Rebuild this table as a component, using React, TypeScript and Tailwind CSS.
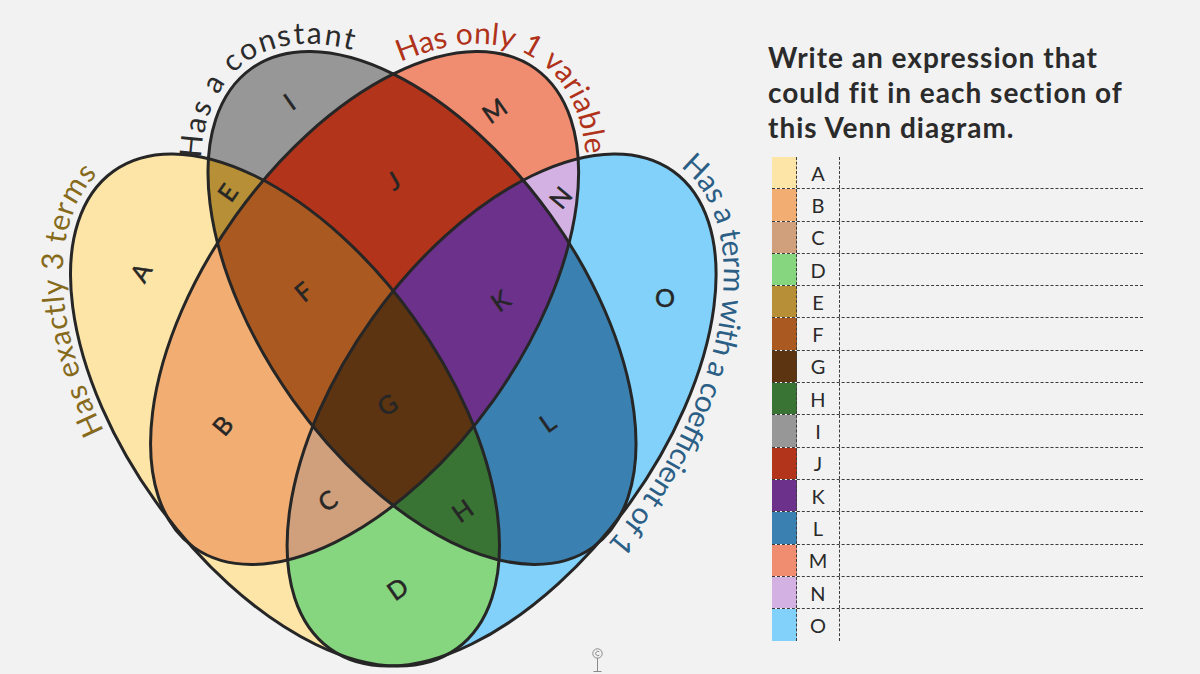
import React from 'react';

const FONT = "Lato, 'Noto Sans', 'DejaVu Sans', sans-serif";

type Ell = { cx: number; cy: number; a: number; b: number; phi: number };

const RX = 294;
const RY = 158.5;
const LABEL_OFF = 8;

// the four sets, left to right
const Y: Ell = { cx: 285, cy: 410, a: RX, b: RY, phi: 54.3 };
const GR: Ell = { cx: 422, cy: 308, a: RX, b: RY, phi: 54.5 };
const RD: Ell = { cx: 364.6, cy: 308, a: RX, b: RY, phi: -54.5 };
const BL: Ell = { cx: 501.6, cy: 410, a: RX, b: RY, phi: -54.3 };

const ids = new Map<Ell, string>([
  [Y, 'cY'],
  [GR, 'cG'],
  [RD, 'cR'],
  [BL, 'cB'],
]);

const colors: Record<string, string> = {
  A: '#fce5a6',
  B: '#f1ad72',
  C: '#d0a07c',
  D: '#86d57f',
  E: '#b68f36',
  F: '#aa5921',
  G: '#5c3412',
  H: '#3a7434',
  I: '#979797',
  J: '#b1341b',
  K: '#6b318b',
  L: '#3a80b0',
  M: '#f08c70',
  N: '#d3b2e3',
  O: '#81d1fa',
};

function Shape({ e, ...rest }: { e: Ell } & React.SVGProps<SVGEllipseElement>) {
  return (
    <ellipse
      cx={e.cx}
      cy={e.cy}
      rx={e.a}
      ry={e.b}
      transform={`rotate(${e.phi} ${e.cx} ${e.cy})`}
      {...rest}
    />
  );
}

// paint the intersection of all sets in the list
function Inter({ sets, fill }: { sets: Ell[]; fill: string }) {
  const last = sets[sets.length - 1];
  let node: React.ReactNode = <Shape e={last} fill={fill} />;
  for (let i = sets.length - 2; i >= 0; i--) {
    node = <g clipPath={`url(#${ids.get(sets[i])})`}>{node}</g>;
  }
  return <>{node}</>;
}

function point(e: Ell, tDeg: number, off: number) {
  const t = (tDeg * Math.PI) / 180;
  const p = (e.phi * Math.PI) / 180;
  const u = (e.a + off) * Math.cos(t);
  const v = (e.b + off) * Math.sin(t);
  return [e.cx + u * Math.cos(p) - v * Math.sin(p), e.cy + u * Math.sin(p) + v * Math.cos(p)];
}

function arc(e: Ell, t0: number, t1: number, off: number) {
  const pts: number[][] = [];
  const steps = 120;
  for (let i = 0; i <= steps; i++) pts.push(point(e, t0 + ((t1 - t0) * i) / steps, off));
  let len = 0;
  for (let i = 1; i < pts.length; i++) {
    len += Math.hypot(pts[i][0] - pts[i - 1][0], pts[i][1] - pts[i - 1][1]);
  }
  const d = pts.map((q, i) => `${i ? 'L' : 'M'}${q[0].toFixed(1)} ${q[1].toFixed(1)}`).join(' ');
  return { d, len };
}

const labels = [
  { id: 'lG', text: 'Has a constant', e: GR, t0: 146, t1: 214, color: '#2b2b2b' },
  { id: 'lR', text: 'Has only 1 variable', e: RD, t0: -43, t1: 33, color: '#b0321a' },
  { id: 'lY', text: 'Has exactly 3 terms', e: Y, t0: 107, t1: 175, color: '#876b1d' },
  { id: 'lB', text: 'Has a term with a coefficient of 1', e: BL, t0: 1, t1: 99, color: '#2b5f86' },
];

const letters: [string, number, number, number][] = [
  ['A', 140, 272, -60],
  ['B', 222, 425, -50],
  ['C', 327, 500, -35],
  ['D', 397, 588, -35],
  ['E', 227, 192, -55],
  ['F', 303, 291, -40],
  ['G', 387, 404, -30],
  ['H', 462, 510, -35],
  ['I', 289, 101, -35],
  ['J', 393, 180, -30],
  ['K', 500, 300, -35],
  ['L', 547, 422, -35],
  ['M', 494, 110, -35],
  ['N', 560, 197, -50],
  ['O', 665, 297, 0],
];

function Venn() {
  return (
    <svg width={760} height={674} viewBox="0 0 760 674" className="shrink-0" style={{ fontFamily: FONT }}>
      <defs>
        {[Y, GR, RD, BL].map((e) => (
          <clipPath key={ids.get(e)} id={ids.get(e)}>
            <Shape e={e} />
          </clipPath>
        ))}
        {labels.map((l) => (
          <path key={l.id} id={l.id} d={arc(l.e, l.t0, l.t1, LABEL_OFF).d} />
        ))}
      </defs>

      <Shape e={Y} fill={colors.A} />
      <Shape e={BL} fill={colors.O} />
      <Shape e={GR} fill={colors.I} />
      <Shape e={RD} fill={colors.M} />

      <Inter sets={[Y, GR]} fill={colors.E} />
      <Inter sets={[Y, RD]} fill={colors.B} />
      <Inter sets={[Y, BL]} fill={colors.D} />
      <Inter sets={[GR, RD]} fill={colors.J} />
      <Inter sets={[GR, BL]} fill={colors.L} />
      <Inter sets={[RD, BL]} fill={colors.N} />

      <Inter sets={[Y, GR, RD]} fill={colors.F} />
      <Inter sets={[Y, GR, BL]} fill={colors.H} />
      <Inter sets={[Y, RD, BL]} fill={colors.C} />
      <Inter sets={[GR, RD, BL]} fill={colors.K} />

      <Inter sets={[Y, GR, RD, BL]} fill={colors.G} />

      {[Y, GR, RD, BL].map((e) => (
        <Shape key={ids.get(e)} e={e} fill="none" stroke="#262626" strokeWidth={3} />
      ))}

      {letters.map(([ch, x, y, r]) => (
        <text
          key={ch}
          x={x}
          y={y}
          fontSize={25}
          fill="#262626"
          stroke="#262626"
          strokeWidth={0.5}
          textAnchor="middle"
          dominantBaseline="central"
          transform={`rotate(${r} ${x} ${y})`}
        >
          {ch}
        </text>
      ))}

      {labels.map((l) => (
        <text key={l.id} fontSize={30} fill={l.color}>
          <textPath href={`#${l.id}`} textLength={arc(l.e, l.t0, l.t1, LABEL_OFF).len} lengthAdjust="spacing">
            {l.text}
          </textPath>
        </text>
      ))}

      {/* little copyright marker */}
      <g stroke="#8a8a8a" fill="none" strokeWidth={1}>
        <circle cx={597.5} cy={653.5} r={4.7} />
        <path d="M599.3 651.8a2.2 2.2 0 1 0 0 3.4" />
        <path d="M597.5 658.2V671.5M593.5 671.5h8" />
      </g>
    </svg>
  );
}

const rows: [string, string][] = [
  ['A', 'bg-[#fce5a6]'],
  ['B', 'bg-[#f1ad72]'],
  ['C', 'bg-[#d0a07c]'],
  ['D', 'bg-[#86d57f]'],
  ['E', 'bg-[#b68f36]'],
  ['F', 'bg-[#aa5921]'],
  ['G', 'bg-[#5c3412]'],
  ['H', 'bg-[#3a7434]'],
  ['I', 'bg-[#979797]'],
  ['J', 'bg-[#b1341b]'],
  ['K', 'bg-[#6b318b]'],
  ['L', 'bg-[#3a80b0]'],
  ['M', 'bg-[#f08c70]'],
  ['N', 'bg-[#d3b2e3]'],
  ['O', 'bg-[#81d1fa]'],
];

function AnswerTable() {
  return (
    <div className="mt-[12px] ml-[4px] w-[371px]">
      {rows.map(([ch, bg], i) => (
        <div
          key={ch}
          className={
            i < rows.length - 1
              ? 'flex h-[32.3px] border-b border-dashed border-[#3c3c3c]'
              : 'flex h-[32.3px]'
          }
        >
          <div className={`w-[25px] shrink-0 border-r border-dashed border-[#3c3c3c] ${bg}`} />
          <div className="w-[43px] shrink-0 border-r border-dashed border-[#3c3c3c] flex items-center justify-center text-[20px] text-[#2a2a2a]">
            {ch}
          </div>
          <div className="flex-1" />
        </div>
      ))}
    </div>
  );
}

export default function App() {
  return (
    <div className="w-[1200px] h-[674px] bg-[#f2f2f2] flex overflow-hidden" style={{ fontFamily: FONT }}>
      <Venn />
      <div className="flex flex-col pt-[40px] pl-[8px]">
        <h1 className="text-[28px] leading-[35px] font-bold tracking-[1px] text-[#2b2b2b]">
          Write an expression that
          <br />
          could fit in each section of
          <br />
          this Venn diagram.
        </h1>
        <AnswerTable />
      </div>
    </div>
  );
}
